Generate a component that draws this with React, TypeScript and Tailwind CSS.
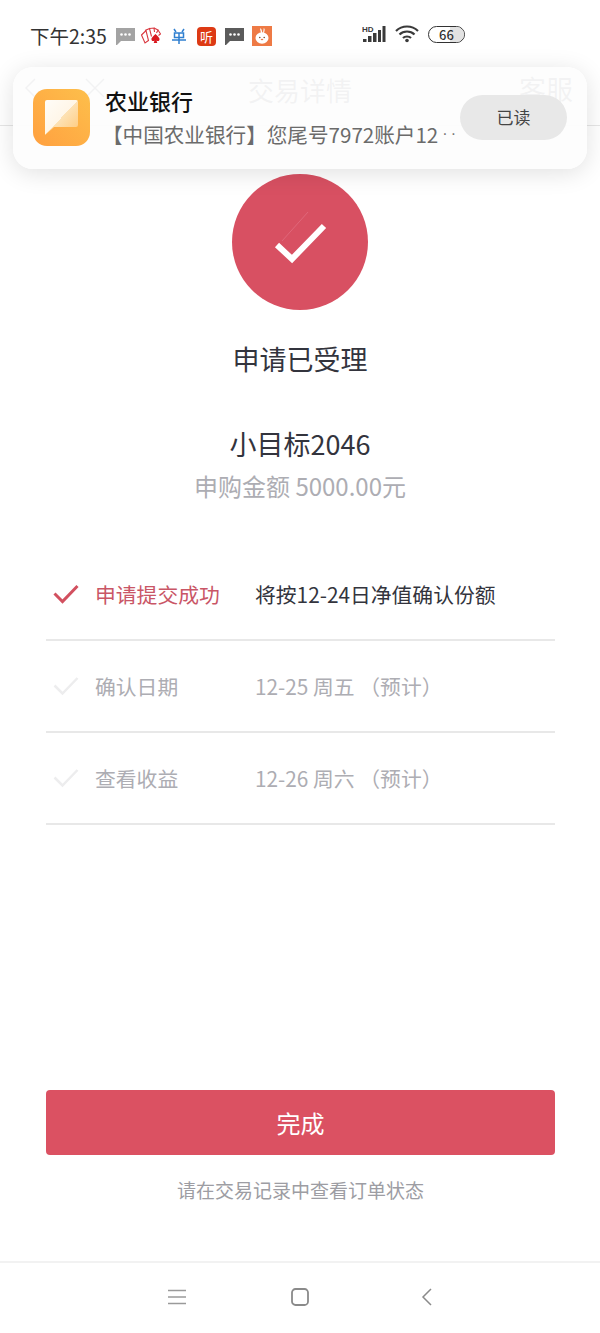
const font = { fontFamily: '"Noto Sans CJK SC", "Noto Sans", sans-serif' };

function Bubble({ color }: { color: string }) {
  return (
    <svg width="19" height="19" viewBox="0 0 19 19">
      <path d="M0 1h19v13H5l-4 4H0z" fill={color} />
      <circle cx="5.500" cy="7.500" r="1.300" fill="#fff" />
      <circle cx="9.500" cy="7.500" r="1.300" fill="#fff" />
      <circle cx="13.500" cy="7.500" r="1.300" fill="#fff" />
    </svg>
  );
}

function Cards() {
  return (
    <svg width="20" height="18" viewBox="0 0 20 18" fill="none" stroke="#d9363e" strokeWidth="1.100">
      <path d="M.5 8 5 3.500l2.500 10L4 16z" />
      <path d="M4 3.500 8.500 1.500l2 8" />
      <path d="M8.500 1.500 13 1l.5 4" />
      <path d="M13 1l4 2-1.500 3" />
      <path d="M17 3l2.500 4-2 1.500" />
      <path d="M14.500 7c2 2.400 4.500 3.600 4 5.800-.3 1.500-2 1.500-3 .6l.8 2.600h-3.600l.8-2.600c-1 .9-2.700.9-3-.6-.5-2.200 2-3.400 4-5.800z" fill="#d9181f" stroke="none" />
    </svg>
  );
}

function Yuan() {
  return (
    <svg width="14" height="16" viewBox="0 0 14 16" fill="none" stroke="#2f7fd0" strokeWidth="1.500">
      <path d="M2 1l2 3M12 1l-2 3" />
      <path d="M2.500 5h9v4.500h-9zM0 12h14M7 5v11" />
    </svg>
  );
}

function Rabbit() {
  return (
    <svg width="20" height="20" viewBox="0 0 20 20">
      <rect width="20" height="20" fill="#ee7a45" />
      <path d="M9 7 8 2.500c1.200-.5 2 1 2.200 4.500zM11 7l.8-5c1.200.3 1.200 3-.1 5z" fill="#fff" />
      <ellipse cx="10" cy="12" rx="6.500" ry="5.800" fill="#fff" />
      <circle cx="7.800" cy="11.500" r=".8" fill="#7a4a30" />
      <circle cx="12.200" cy="11.500" r=".8" fill="#7a4a30" />
      <ellipse cx="10" cy="13.500" rx="1.300" ry=".8" fill="#ee7a45" />
    </svg>
  );
}

function Check({ color, width }: { color: string; width: number }) {
  return (
    <svg width="26" height="20" viewBox="0 0 26 20" fill="none" stroke={color} strokeWidth={width}>
      <path d="M1.500 9.500 9.500 17.500 24.500 2" />
    </svg>
  );
}

function StepRow({ done, label, text }: { done?: boolean; label: string; text: string }) {
  return (
    <div className="flex h-[92px] items-center border-b-2 border-[#e8e8e8] pl-[7px]">
      <Check color={done ? "#d2505f" : "#ededee"} width={done ? 3 : 2.500} />
      <div className={`ml-4 w-[160px] pt-[2px] text-[20.800px] ${done ? "text-[#c95666]" : "text-[#adadb3]"}`}>{label}</div>
      <div className={`whitespace-nowrap pt-[2px] text-[20.800px] ${done ? "text-[#33343d]" : "text-[#adadb3]"}`}>{text}</div>
    </div>
  );
}

export default function App() {
  return (
    <div className="relative flex h-[1333px] w-[600px] flex-col overflow-hidden bg-white" style={font}>
      {/* status bar */}
      <div className="flex h-[66px] shrink-0 items-start justify-between pt-[25px] pl-[30px] pr-[135px]">
        <div className="flex items-center">
          <span className="text-[19.500px] leading-[22px] text-[#333]">下午2:35</span>
          <div className="ml-[9px]"><Bubble color="#a3a3a3" /></div>
          <div className="ml-[6px]"><Cards /></div>
          <div className="ml-[11px]"><Yuan /></div>
          <div className="ml-[11px] flex h-[19px] w-[19px] items-center justify-center rounded-[4px] bg-[#dd3a14] text-[13px] leading-none text-white">听</div>
          <div className="ml-[9px]"><Bubble color="#5b5b5b" /></div>
          <div className="ml-[8px]"><Rabbit /></div>
        </div>
        <div className="flex items-center gap-[9px]">
          <svg width="24" height="18" viewBox="0 0 24 18" fill="#3a3a3a">
            <text x="0" y="7" fontSize="8" fontWeight="700" fontFamily="Liberation Sans">HD</text>
            <rect x="1" y="14" width="3.500" height="3" />
            <rect x="6" y="11" width="3.500" height="6" />
            <rect x="11" y="8" width="3.500" height="9" />
            <rect x="16" y="5" width="3" height="12" />
            <rect x="20.500" y="1" width="3" height="16" />
          </svg>
          <svg width="24" height="18" viewBox="0 0 24 18" fill="none" stroke="#3a3a3a" strokeWidth="2.200">
            <path d="M1 6c6-6 16-6 22 0M4.500 9.500c4-4 11-4 15 0M8 13c2-2 6-2 8 0" />
            <circle cx="12" cy="15.500" r="1.800" fill="#3a3a3a" stroke="none" />
          </svg>
          <div className="relative flex h-[17px] w-[37px] items-center justify-center overflow-hidden rounded-full border border-[#333] text-[13px] leading-none font-medium text-[#333]">
            <div className="absolute inset-y-0 right-0 w-[14px] bg-[#e2e2e2]" />
            <span className="relative">66</span>
          </div>
        </div>
      </div>

      {/* nav, mostly behind the notification */}
      <div className="relative flex h-[60px] shrink-0 items-center justify-center border-b border-[#e6e6e6] pb-[13px]">
        <svg className="absolute top-[12px] left-[24px]" width="90" height="20" viewBox="0 0 90 20" fill="none" stroke="#33343d" strokeWidth="1.500">
          <path d="M11 1 2 10l9 9M62 1l18 18M80 1 62 19" />
        </svg>
        <span className="text-[26px] text-[#33343d]">交易详情</span>
        <span className="absolute right-[27px] text-[27px] text-[#33343d]">客服</span>
      </div>

      {/* result */}
      <div className="flex flex-1 flex-col pt-[48px]">
        <div className="flex flex-col items-center">
          <div className="h-[136px] w-[136px] rounded-full bg-[#d85062]">
            <svg width="136" height="136" viewBox="0 0 136 136" fill="none">
              <path d="M50 67 76 38" stroke="#e0677a" strokeWidth="1" />
              <path d="M45 71 60 85 92 52" stroke="#fff" strokeWidth="6" />
            </svg>
          </div>
          <div className="mt-[29px] text-[27px] leading-[40px] text-[#33343d]">申请已受理</div>
          <div className="mt-[45px] text-[27px] leading-[40px] text-[#33343d]">小目标2046</div>
          <div className="mt-[2px] text-[24px] leading-[40px] text-[#adadb3]">申购金额 5000.00元</div>
        </div>

        {/* steps */}
        <div className="mt-[43px] ml-[46px] mr-[45px] flex flex-col">
          <StepRow done label="申请提交成功" text="将按12-24日净值确认份额" />
          <StepRow label="确认日期" text="12-25 周五 （预计）" />
          <StepRow label="查看收益" text="12-26 周六 （预计）" />
        </div>
      </div>

      {/* footer */}
      <div className="flex shrink-0 flex-col items-center pr-[45px] pb-[56px] pl-[46px]">
        <button className="h-[65px] w-full rounded-[4px] bg-[#db5162] text-[24px] text-white">完成</button>
        <div className="mt-[20px] text-[19px] leading-[30px] text-[#9d9da3]">请在交易记录中查看订单状态</div>
      </div>

      {/* nav bar */}
      <div className="flex h-[72px] shrink-0 items-center border-t-2 border-[#f2f2f2] pb-[3px] pl-[168px]">
        <svg width="18" height="16" viewBox="0 0 18 16" stroke="#9a9a9a" strokeWidth="1.500">
          <path d="M0 1.500h18M0 8h18M0 14.500h18" />
        </svg>
        <svg className="ml-[105px]" width="18" height="18" viewBox="0 0 18 18" fill="none" stroke="#8a8a8a" strokeWidth="1.800">
          <rect x="1" y="1" width="16" height="16" rx="3.500" />
        </svg>
        <svg className="ml-[112px]" width="11" height="18" viewBox="0 0 11 18" fill="none" stroke="#8a8a8a" strokeWidth="1.500">
          <path d="M10 1 2 9l8 8" />
        </svg>
      </div>

      {/* notification */}
      <div className="absolute top-[67px] left-[13px] flex h-[102px] w-[574px] items-center rounded-[20px] bg-[#fdfdfd]/95 pr-[20px] pb-[2px] pl-[20px] shadow-[0_4px_24px_rgba(0,0,0,0.12)]">
        <div className="flex h-[57px] w-[57px] shrink-0 items-center justify-center rounded-[14px] bg-gradient-to-bl from-[#fdbf4b] to-[#ffa040]">
          <svg width="33" height="35" viewBox="0 0 33 35">
            <defs>
              <linearGradient id="note" x1="0" y1="0" x2="1" y2="1">
                <stop offset="0" stopColor="#fffdf8" />
                <stop offset="0.5" stopColor="#fff6e8" />
                <stop offset="0.5" stopColor="#fde2b5" />
                <stop offset="1" stopColor="#ffc878" />
              </linearGradient>
            </defs>
            <path d="M2 0h29a2 2 0 0 1 2 2v23a2 2 0 0 1-2 2H9l-9 8V2a2 2 0 0 1 2-2z" fill="url(#note)" />
          </svg>
        </div>
        <div className="ml-[16px] min-w-0 flex-1">
          <div className="-ml-[1px] text-[22px] leading-[30px] font-medium text-[#111]">农业银行</div>
          <div className="mt-[4px] -ml-[4px] flex items-center whitespace-nowrap text-[20.600px] leading-[30px] text-[#6b6b6b]">
            【中国农业银行】您尾号7972账户12
            <span className="ml-[4px] font-['Liberation_Sans'] text-[16px] tracking-[3px] text-[#777]">··</span>
          </div>
        </div>
        <div className="flex h-[45px] w-[107px] shrink-0 items-center justify-center rounded-full bg-[#e8e8e8] text-[17px] text-[#444]">已读</div>
      </div>
    </div>
  );
}
